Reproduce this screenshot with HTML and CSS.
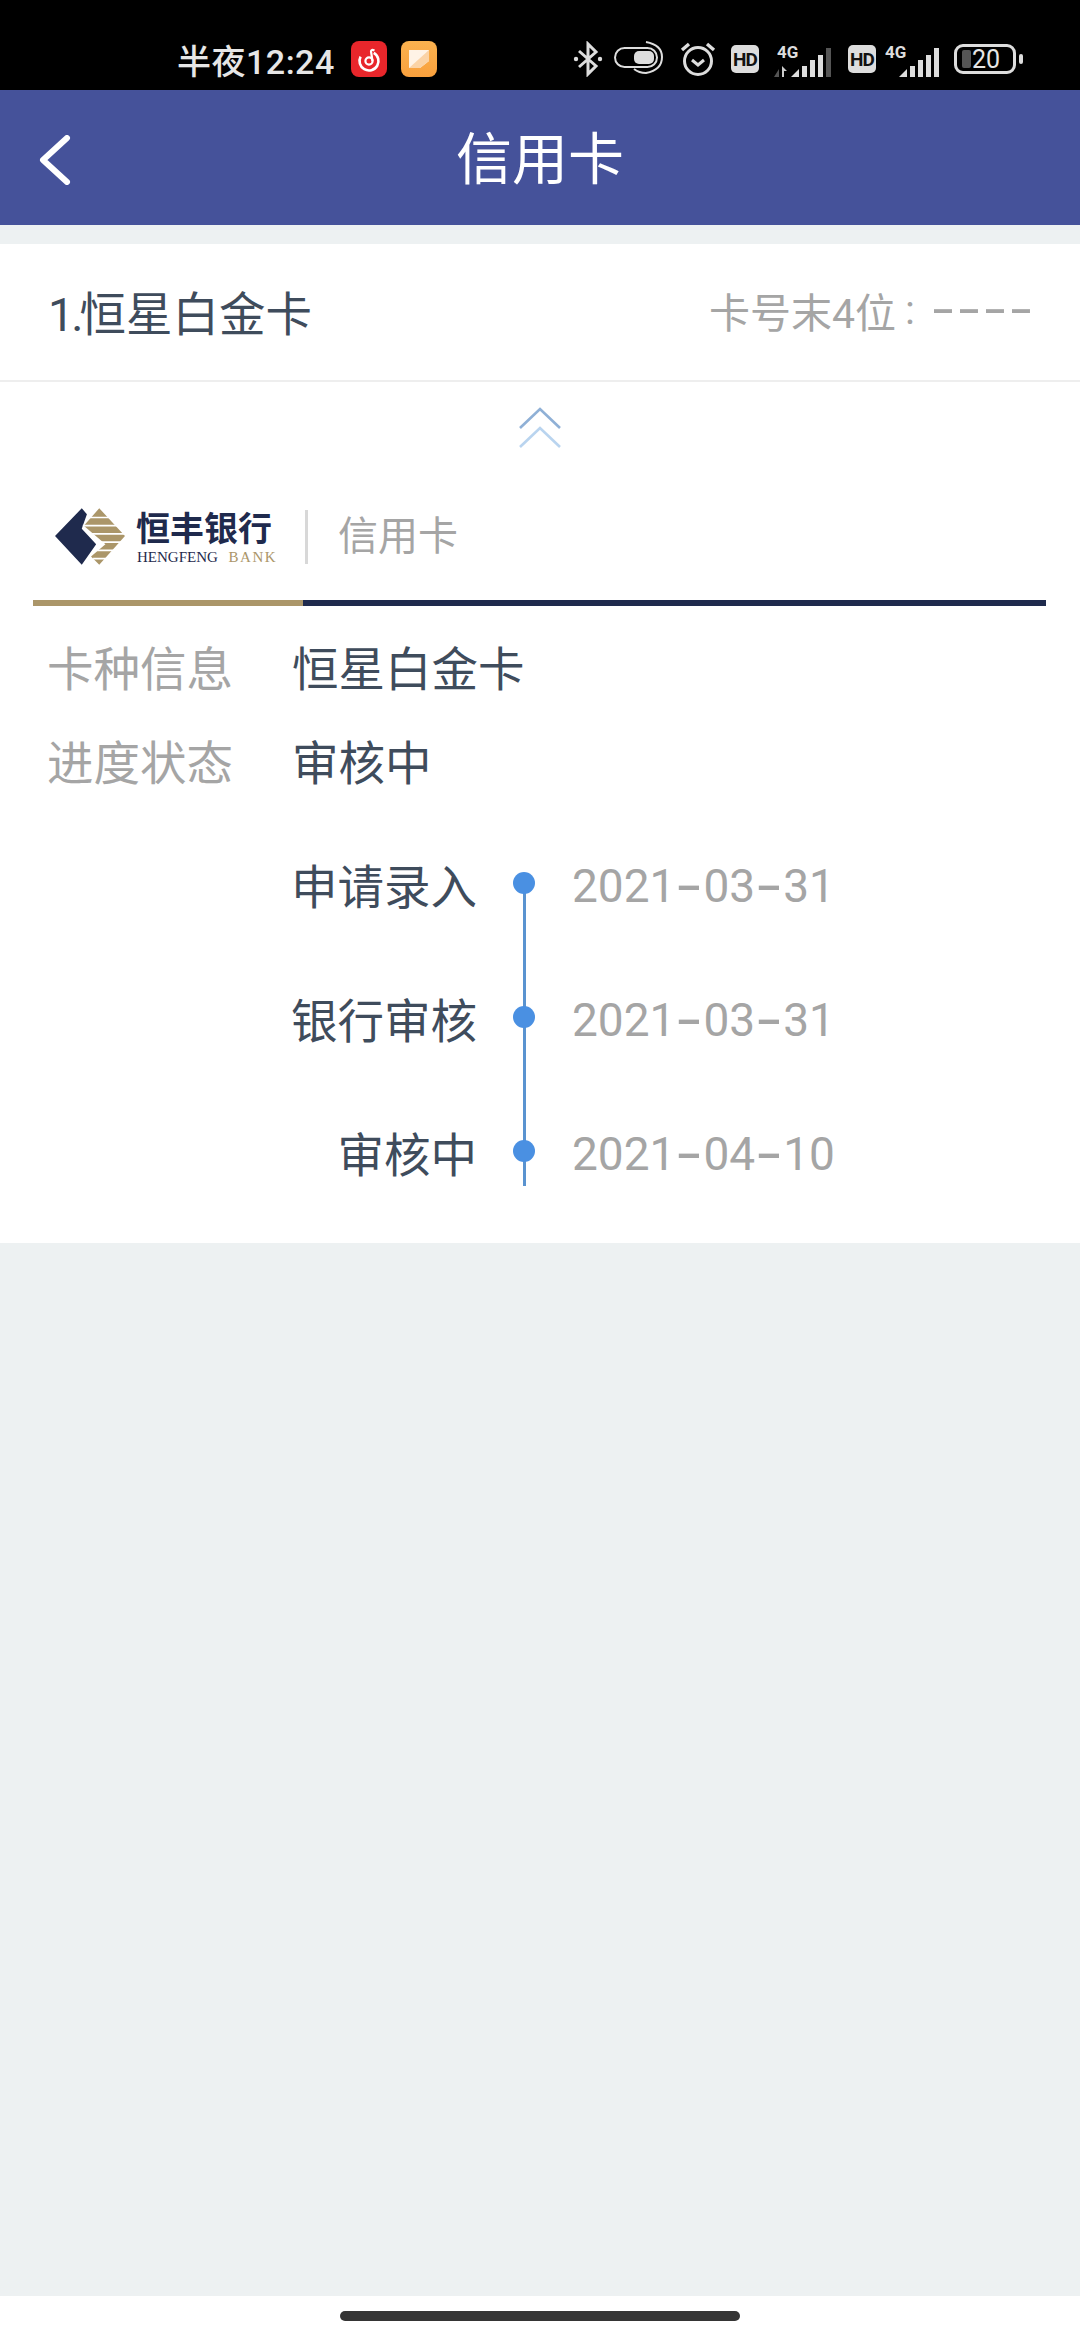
FILE: index.html
```html
<!DOCTYPE html>
<html lang="zh-CN">
<head>
    <meta charset="UTF-8">
    <meta name="viewport" content="width=device-width, initial-scale=1.0">
    <title>信用卡</title>
    <link rel="stylesheet" href="styles.css">
</head>
<body>
    <!-- Status bar -->
    <div class="status-bar">
        <div class="status-left">
            <span class="clock">半夜12:24</span>
            <svg class="app-icon" width="36" height="36" viewBox="0 0 36 36">
                <rect width="36" height="36" rx="8" fill="#e8262b"/>
                <circle cx="18" cy="20" r="9.5" fill="none" stroke="#fff" stroke-width="2.6" stroke-dasharray="44 16" transform="rotate(-60 18 20)"/>
                <circle cx="18" cy="20" r="3.6" fill="none" stroke="#fff" stroke-width="2.2"/>
                <path d="M21.5 20 L20 10.5 Q20 8 23.5 9.5" fill="none" stroke="#fff" stroke-width="2.2"/>
            </svg>
            <svg class="app-icon" width="36" height="36" viewBox="0 0 36 36">
                <defs>
                    <linearGradient id="note" x1="0" y1="0" x2="0" y2="1">
                        <stop offset="0" stop-color="#fbb24f"/>
                        <stop offset="1" stop-color="#f9a03d"/>
                    </linearGradient>
                </defs>
                <rect width="36" height="36" rx="8" fill="url(#note)"/>
                <path d="M8 9 H28 V20 L19 27 H8 Z" fill="#fff3e6"/>
                <path d="M8 27 L28 9 V20 L19 27 Z" fill="#fbd3a6"/>
            </svg>
        </div>
        <div class="status-right">
            <svg width="30" height="36" viewBox="0 0 30 36" fill="none" stroke="#ddd" stroke-width="3">
                <path d="M6 10 L23 25 L15 33 V3 L23 11 L6 26"/>
                <circle cx="3" cy="18" r="2.2" fill="#ddd" stroke="none"/>
                <circle cx="27" cy="18" r="2.2" fill="#ddd" stroke="none"/>
            </svg>
            <svg class="gap-toggle" width="50" height="36" viewBox="0 0 50 36" fill="none" stroke="#ddd" stroke-width="2">
                <rect x="1" y="7" width="42" height="19" rx="9.5"/>
                <rect x="20" y="10" width="20" height="13" rx="5" fill="#ddd" stroke="none"/>
                <path d="M32 1 Q48 4 48 16 Q48 29 32 32 Q25 32 20 28"/>
            </svg>
            <svg class="gap-alarm" width="36" height="36" viewBox="0 0 36 36" fill="none" stroke="#ddd" stroke-width="3">
                <circle cx="18" cy="20" r="13.5"/>
                <path d="M12 19 L18 24 L24 19"/>
                <path d="M2 9 L9 3 M34 9 L27 3" stroke-width="3.4"/>
            </svg>
            <span class="hd gap-hd">HD</span>
            <svg class="gap-sig" width="58" height="36" viewBox="0 0 58 36">
                <text x="3" y="17" class="sig-text">4G</text>
                <path d="M0 36 L5 28 V36 Z" fill="#555"/>
                <path d="M8 36 V25 L13 30 H10 V36 Z" fill="#ccc"/>
                <path d="M17 36 L25 28 V36 Z" fill="#ddd"/>
                <rect x="28" y="25" width="5" height="11" fill="#ddd"/>
                <rect x="36" y="19" width="5" height="17" fill="#ddd"/>
                <rect x="44" y="14" width="5" height="22" fill="#ddd"/>
                <rect x="52" y="7" width="5" height="29" fill="#555"/>
            </svg>
            <span class="hd gap-hd2">HD</span>
            <svg class="gap-sig2" width="54" height="36" viewBox="0 0 54 36">
                <text x="0" y="17" class="sig-text">4G</text>
                <path d="M14 36 L22 28 V36 Z" fill="#ddd"/>
                <rect x="25" y="25" width="5" height="11" fill="#ddd"/>
                <rect x="33" y="19" width="5" height="17" fill="#ddd"/>
                <rect x="41" y="14" width="5" height="22" fill="#ddd"/>
                <rect x="49" y="7" width="5" height="29" fill="#ddd"/>
            </svg>
            <div class="battery">
                <div class="battery-body">
                    <span class="battery-level"></span>
                    <span class="battery-num">20</span>
                </div>
                <span class="battery-cap"></span>
            </div>
        </div>
    </div>

    <!-- Nav bar -->
    <div class="nav-bar">
        <svg class="back" width="34" height="50" viewBox="0 0 34 50" fill="none" stroke="#fff" stroke-width="6" stroke-linecap="round" stroke-linejoin="round">
            <path d="M29 3 L5 25 L29 47"/>
        </svg>
        <div class="nav-title">信用卡</div>
        <div></div>
    </div>

    <div class="main">
        <div class="card">
            <div class="card-head">
                <div class="card-name"><span class="card-index">1.</span>恒星白金卡</div>
                <div class="card-no">卡号末4位<span class="colon">:</span><span class="dash">-</span><span class="dash">-</span><span class="dash">-</span><span class="dash">-</span></div>
            </div>

            <div class="fold">
                <svg width="44" height="42" viewBox="0 0 44 42" fill="none" stroke-width="2.6">
                    <path d="M2 21 L22 2 L42 21" stroke="#8fb0d6"/>
                    <path d="M2 40 L22 21 L42 40" stroke="#b9d4ef"/>
                </svg>
            </div>

            <div class="brand">
                <svg class="brand-mark" width="72" height="60" viewBox="14 14 70 58">
                    <path d="M41 15 L46 21 L41 35 L55 50 L41 70 L15 42 Z" fill="#1f2a4d"/>
                    <path d="M58 15 L83 42 L58 70 L50 62 L64 50 L43 32 Z" fill="#ab9669"/>
                    <path d="M46 24 H72 M42 32 H80 M50 40 H84 M58 48 H82 M56 56 H76 M52 64 H66" stroke="#fff" stroke-width="1.6"/>
                </svg>
                <div class="brand-name">
                    <div class="brand-cn">恒丰银行</div>
                    <div class="brand-en">HENGFENG <span>BANK</span></div>
                </div>
                <div class="brand-type">信用卡</div>
            </div>

            <div class="tab-line">
                <div class="tab-gold"></div>
                <div class="tab-navy"></div>
            </div>

            <div class="info">
                <div class="info-row">
                    <div class="info-label">卡种信息</div>
                    <div>恒星白金卡</div>
                </div>
                <div class="info-row">
                    <div class="info-label">进度状态</div>
                    <div>审核中</div>
                </div>
            </div>

            <div class="timeline">
                <div class="step">
                    <div class="step-name">申请录入</div>
                    <div class="step-axis"><span class="dot"></span></div>
                    <div class="step-date">2021<span class="sep">-</span>03<span class="sep">-</span>31</div>
                </div>
                <div class="step">
                    <div class="step-name">银行审核</div>
                    <div class="step-axis"><span class="dot"></span></div>
                    <div class="step-date">2021<span class="sep">-</span>03<span class="sep">-</span>31</div>
                </div>
                <div class="step">
                    <div class="step-name">审核中</div>
                    <div class="step-axis"><span class="dot"></span></div>
                    <div class="step-date">2021<span class="sep">-</span>04<span class="sep">-</span>10</div>
                </div>
            </div>
        </div>
    </div>

    <div class="home-bar">
        <div class="home-pill"></div>
    </div>
</body>
</html>
```

FILE: styles.css
```css
* {
    box-sizing: border-box;
}

body {
    margin: 0;
    width: 1080px;
    height: 2340px;
    display: flex;
    flex-direction: column;
    background-color: #edf1f2;
    font-family: Roboto, "Noto Sans CJK SC", sans-serif;
    color: #3f4c5c;
    overflow: hidden;
}

/* Status bar */
.status-bar {
    height: 90px;
    background-color: #000;
    display: flex;
    justify-content: space-between;
    align-items: center;
    padding: 28px 57px 0 177px;
    flex-shrink: 0;
}

.status-left {
    display: flex;
    align-items: center;
    gap: 14px;
}

.status-right {
    display: flex;
    align-items: center;
}

.clock {
    color: #e6e6e6;
    font-size: 34px;
    font-weight: 500;
    letter-spacing: 0.5px;
    width: 160px;
    white-space: nowrap;
}

.gap-toggle {
    margin-left: 11px;
}

.gap-alarm {
    margin-left: 16px;
}

.gap-hd {
    margin-left: 15px;
}

.gap-sig {
    margin-left: 15px;
}

.gap-hd2 {
    margin-left: 16px;
}

.gap-sig2 {
    margin-left: 9px;
}

.hd {
    width: 28px;
    height: 28px;
    border-radius: 5px;
    background-color: #ddd;
    color: #111;
    font-size: 19px;
    font-weight: 700;
    display: flex;
    align-items: center;
    justify-content: center;
    letter-spacing: -1px;
}

.sig-text {
    font-family: Roboto, sans-serif;
    font-size: 17px;
    font-weight: 700;
    fill: #ddd;
}

.battery {
    display: flex;
    align-items: center;
    margin-left: 15px;
}

.battery-body {
    width: 62px;
    height: 30px;
    border: 3px solid #ddd;
    border-radius: 9px;
    display: flex;
    align-items: center;
    padding-left: 5px;
}

.battery-level {
    width: 9px;
    height: 18px;
    border-radius: 2px;
    background-color: #555;
}

.battery-num {
    color: #e6e6e6;
    font-size: 25px;
    margin-left: 1px;
}

.battery-cap {
    width: 4px;
    height: 10px;
    margin-left: 3px;
    border-radius: 2px;
    background-color: #ddd;
}

/* Nav bar */
.nav-bar {
    height: 135px;
    background-color: #45529a;
    display: grid;
    grid-template-columns: 1fr auto 1fr;
    align-items: center;
    padding: 0 38px;
    flex-shrink: 0;
}

.nav-title {
    color: #fff;
    font-size: 56px;
    margin-top: -6px;
}

.back {
    margin-top: 5px;
}

/* Card */
.main {
    flex: 1;
    padding-top: 19px;
}

.card {
    background-color: #fff;
    height: 999px;
}

.card-head {
    height: 138px;
    padding: 0 46px 4px 48px;
    display: flex;
    justify-content: space-between;
    align-items: center;
    border-bottom: 2px solid #eeeeee;
}

.card-name {
    font-size: 46.5px;
}

.card-index {
    letter-spacing: -3px;
    margin-right: -1px;
}

.card-no {
    font-size: 41px;
    color: #a5a5a5;
    display: flex;
    align-items: center;
}

.colon {
    width: 34px;
    padding-left: 9px;
}

.dash {
    width: 26px;
    text-align: center;
    font-weight: 500;
    transform: scaleX(1.7);
}

.fold {
    height: 92px;
    display: flex;
    justify-content: center;
    align-items: center;
}

.brand {
    height: 126px;
    padding-left: 54px;
    display: flex;
    align-items: center;
}

.brand-name {
    margin-left: 10px;
    width: 138px;
}

.brand-cn {
    font-size: 34px;
    font-weight: 700;
    line-height: 40px;
    color: #1f2a4d;
    white-space: nowrap;
}

.brand-en {
    font-family: "Liberation Serif", serif;
    font-size: 15px;
    line-height: 16px;
    color: #1f2a4d;
    white-space: nowrap;
    padding-left: 1px;
}

.brand-en span {
    color: #ab9669;
    margin-left: 7px;
    letter-spacing: 1.5px;
}

.brand-type {
    margin-left: 31px;
    padding-left: 30px;
    border-left: 3px solid #d8d8d8;
    font-size: 40px;
    line-height: 54px;
    color: #a5a5a5;
}

.tab-line {
    margin: 0 34px 0 33px;
    height: 6px;
    display: flex;
}

.tab-gold {
    width: 270px;
    background-color: #ab9669;
}

.tab-navy {
    flex: 1;
    background-color: #1f2a4d;
}

/* Info rows */
.info {
    padding: 12px 0 0 47px;
    font-size: 46.5px;
}

.info-row {
    height: 94px;
    display: flex;
    align-items: center;
}

.info-label {
    width: 245px;
    color: #a5a5a5;
    white-space: nowrap;
}

/* Timeline */
.timeline {
    padding-top: 10px;
}

.step {
    height: 134px;
    display: grid;
    grid-template-columns: 477px 93px 1fr;
    align-items: center;
    font-size: 46.5px;
}

.step-name {
    text-align: right;
}

.step-axis {
    height: 100%;
    position: relative;
    display: flex;
    justify-content: center;
    align-items: center;
}

.step-axis::before {
    content: "";
    position: absolute;
    top: 0;
    bottom: 0;
    left: 50%;
    width: 3px;
    margin-left: -1px;
    background-color: #5a93d0;
}

.step:first-child .step-axis::before {
    top: 50%;
}

.step:last-child .step-axis::before {
    bottom: 32px;
}

.dot {
    width: 22px;
    height: 22px;
    border-radius: 50%;
    background-color: #4a90e2;
    position: relative;
}

.step-date {
    color: #a5a5a5;
    font-size: 46px;
    white-space: nowrap;
    margin-left: 2px;
    padding-top: 6px;
}

.sep {
    display: inline-block;
    width: 28px;
    text-align: center;
    font-weight: 500;
    transform: scaleX(1.7);
}

/* Home indicator */
.home-bar {
    height: 44px;
    background-color: #fff;
    padding-top: 15px;
    display: flex;
    justify-content: center;
    flex-shrink: 0;
}

.home-pill {
    width: 400px;
    height: 10px;
    border-radius: 5px;
    background-color: #353535;
}
```
